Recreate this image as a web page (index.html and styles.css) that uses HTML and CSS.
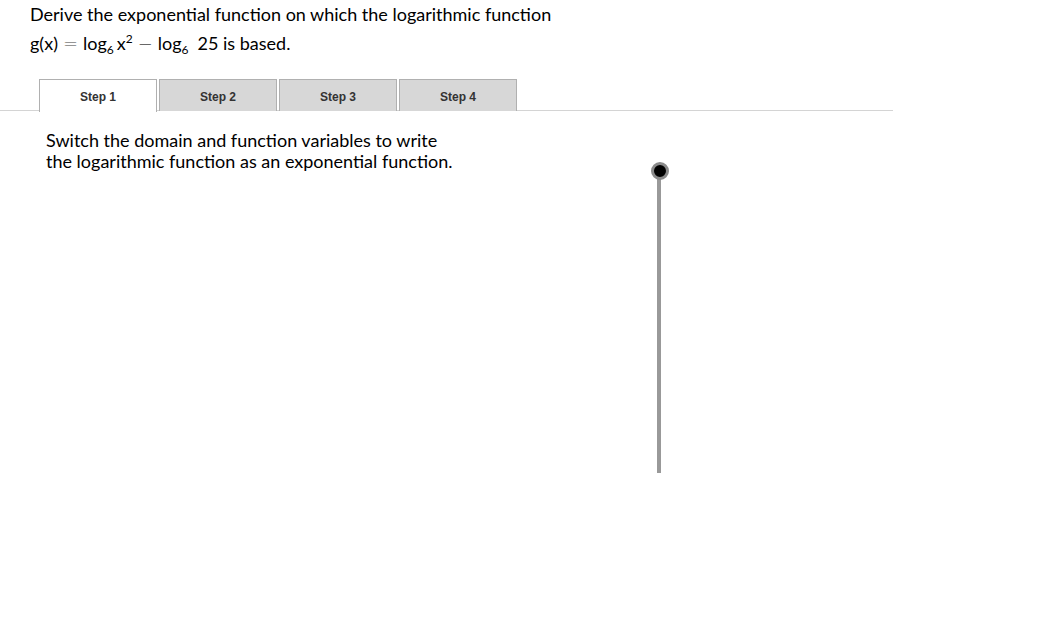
FILE: index.html
```html
<!DOCTYPE html>
<html>
<head>
<meta charset="utf-8">
<link rel="stylesheet" href="styles.css">
</head>
<body>
<div class="page">
  <div class="title">
    <div class="line">Derive the exponential function on which the logarithmic function</div>
    <div class="line">g(x)<span class="op">=</span>log<sub>6</sub><span class="thin"></span>x<sup>2</sup><span class="op">&minus;</span>log<sub>6</sub><span class="gap"></span>25 is based.</div>
  </div>
  <div class="tabbar">
    <div class="tab active">Step 1</div>
    <div class="tab">Step 2</div>
    <div class="tab">Step 3</div>
    <div class="tab">Step 4</div>
  </div>
  <div class="content">
    <div class="text">
      <div class="line">Switch the domain and function variables to write</div>
      <div class="line">the logarithmic function as an exponential function.</div>
    </div>
    <div class="slider">
      <div class="track"></div>
      <div class="knob"></div>
    </div>
  </div>
</div>
</body>
</html>
```
FILE: styles.css
```css
html, body {
  margin: 0;
  padding: 0;
  background: #fff;
}
.page {
  width: 1058px;
  height: 622px;
  font-family: "Lato", "Liberation Sans", sans-serif;
  color: #000;
}
.title {
  padding: 0 0 0 30px;
  font-size: 18px;
  line-height: 29px;
}
.title sub {
  font-size: 12px;
  vertical-align: -4px;
  line-height: 0;
}
.title sup {
  font-size: 12px;
  vertical-align: 7px;
  line-height: 0;
}
.op {
  display: inline-block;
  margin: 0 5px;
  font-family: "DejaVu Sans", sans-serif;
  font-weight: 300;
  color: #444;
}
.thin {
  display: inline-block;
  width: 3px;
}
.gap {
  display: inline-block;
  width: 9px;
}
.tabbar {
  display: flex;
  width: 893px;
  margin-top: 21px;
  padding-left: 39px;
  box-sizing: border-box;
  border-bottom: 1px solid #d4d4d4;
  height: 32px;
}
.tab {
  width: 116px;
  margin-right: 2px;
  background: #d7d7d7;
  border: 1px solid #b0b0b0;
  border-bottom: none;
  font-family: "Liberation Sans", Arial, sans-serif;
  font-weight: bold;
  font-size: 12px;
  color: #333;
  display: flex;
  align-items: center;
  justify-content: center;
  padding-top: 2px;
  box-sizing: content-box;
  height: 29px;
}
.tab.active {
  background: #fff;
  height: 30px;
  margin-bottom: -1px;
}
.content {
  position: relative;
  height: 510px;
}
.text {
  padding: 19px 0 0 46px;
  font-size: 18px;
  line-height: 21px;
}
.slider {
  position: absolute;
  left: 650px;
  top: 51px;
  width: 18px;
  height: 320px;
}
.track {
  position: absolute;
  left: 7px;
  top: 8px;
  width: 4px;
  height: 303px;
  background: #999;
}
.knob {
  position: absolute;
  left: 1px;
  top: 0;
  width: 12px;
  height: 12px;
  border-radius: 50%;
  background: #000;
  border: 3px solid #8a8a8a;
}
```
